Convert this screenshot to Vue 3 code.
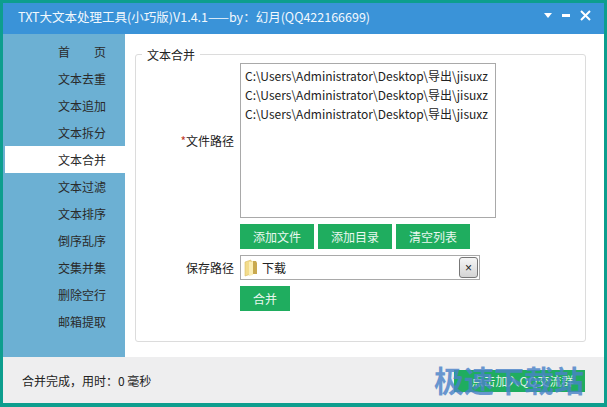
<template>
  <div class="window">
    <header class="titlebar">
      <span class="title">TXT大文本处理工具(小巧版)V1.4.1——by：幻月(QQ422166699)</span>
      <div class="controls">
        <svg width="8" height="5" viewBox="0 0 8 5"><path d="M0 0h8L4 5z" fill="#fff" /></svg>
        <svg width="8" height="3" viewBox="0 0 8 3"><rect width="8" height="3" y="0" fill="#fff" /></svg>
        <svg width="11" height="11" viewBox="0 0 11 11"><path d="M1 1l9 9M10 1l-9 9" stroke="#fff" stroke-width="2" fill="none" /></svg>
      </div>
    </header>

    <div class="body">
      <nav class="sidebar">
        <div
          v-for="item in menu"
          :key="item"
          class="menu-item"
          :class="{ active: item === '文本合并' }"
        >
          <span v-if="item === '首页'" class="spread"><i>首</i><i>页</i></span>
          <span v-else>{{ item }}</span>
        </div>
      </nav>

      <main class="content">
        <fieldset class="group">
          <legend>文本合并</legend>
          <div class="row">
            <label class="field-label"><em>*</em>文件路径</label>
            <div class="listbox">
              <div v-for="n in 3" :key="n" class="path">C:\Users\Administrator\Desktop\导出\jisuxz</div>
            </div>
          </div>
          <div class="row buttons">
            <span class="field-label"></span>
            <button v-for="b in actions" :key="b" class="btn">{{ b }}</button>
          </div>
          <div class="row save">
            <label class="field-label">保存路径</label>
            <div class="picker">
              <svg class="folder" width="14" height="18" viewBox="0 0 14 18">
                <path d="M1 3 L7 1 V15 L1 17 Z" fill="#f3dc8c" stroke="#d8bc63" stroke-width=".6" />
                <path d="M7 2 H12 L13 4 V15 H7 Z" fill="#c9a94f" />
                <path d="M5 3 L9 2 V16 L5 17 Z" fill="#fbeeb6" />
              </svg>
              <span class="picker-text">下载</span>
              <button class="clear">×</button>
            </div>
          </div>
          <div class="row merge">
            <span class="field-label"></span>
            <button class="btn small">合并</button>
          </div>
        </fieldset>
      </main>
    </div>

    <footer class="status">
      <span>合并完成，用时：0 毫秒</span>
      <div class="qq-wrap">
        <button class="btn qq">点击加入QQ交流群</button>
        <span class="watermark">极速下载站</span>
      </div>
    </footer>
  </div>
</template>

<script setup>
const menu = [
  "首页",
  "文本去重",
  "文本追加",
  "文本拆分",
  "文本合并",
  "文本过滤",
  "文本排序",
  "倒序乱序",
  "交集并集",
  "删除空行",
  "邮箱提取",
];
const actions = ["添加文件", "添加目录", "清空列表"];
</script>

<style>
html,
body {
  margin: 0;
  background: #0d9e8e;
}
</style>

<style scoped>
.window {
  box-sizing: border-box;
  width: 607px;
  height: 407px;
  padding: 3px 3px 4px 3px;
  display: flex;
  flex-direction: column;
  font-family: "Noto Sans CJK SC", "Noto Sans", sans-serif;
  font-size: 12px;
  color: #222;
}
.titlebar {
  height: 31px;
  flex: none;
  display: flex;
  align-items: center;
  justify-content: space-between;
  padding: 0 13px 0 15px;
  background: #3a93d8;
  color: #f2f8fd;
}
.title {
  font-size: 12.5px;
  white-space: nowrap;
  margin-top: -4px;
}
.controls {
  display: flex;
  align-items: center;
  gap: 10px;
  margin-top: -6px;
}
.body {
  flex: 1;
  display: flex;
  min-height: 0;
  background: #fff;
}
.sidebar {
  width: 122px;
  flex: none;
  padding-top: 4px;
  background: #6cb0d3;
}
.menu-item {
  height: 27px;
  display: flex;
  align-items: center;
  padding-left: 55px;
  color: #2a2a2a;
  font-size: 12px;
}
.menu-item.active {
  margin-left: 2px;
  padding-left: 53px;
  background: #fff;
}
.spread {
  width: 48px;
  display: flex;
  justify-content: space-between;
}
.spread i {
  font-style: normal;
}
.content {
  flex: 1;
  padding: 12px 18px 15px 10px;
  display: flex;
  min-width: 0;
}
.group {
  flex: 1;
  min-width: 0;
  margin: 0;
  padding: 0 0 0 0;
  border: 1px solid #dcdcdc;
  border-radius: 3px;
  box-sizing: border-box;
}
legend {
  margin-left: 6px;
  padding: 0 5px;
  font-size: 12px;
  line-height: 17px;
}
.row {
  display: flex;
  align-items: center;
}
.field-label {
  width: 98px;
  flex: none;
  text-align: right;
  margin-right: 6px;
}
.field-label em {
  color: #c0392b;
  font-style: normal;
}
.listbox {
  box-sizing: border-box;
  width: 256px;
  height: 155px;
  margin-top: 0;
  padding: 2px 0 0 4px;
  border: 1px solid #a9a9a9;
  overflow: hidden;
}
.path {
  height: 19px;
  line-height: 19px;
  white-space: nowrap;
  overflow: hidden;
  font-size: 12px;
}
.buttons {
  margin-top: 6px;
  gap: 0;
}
.btn {
  width: 74px;
  height: 25px;
  margin-right: 4px;
  padding: 0;
  border: 0;
  background: #1fad5f;
  color: #eaf8f0;
  font: inherit;
}
.btn.small {
  width: 50px;
}
.save {
  margin-top: 6px;
}
.picker {
  box-sizing: border-box;
  width: 240px;
  height: 25px;
  display: flex;
  align-items: center;
  padding: 0 1px 0 3px;
  border: 1px solid #a9a9a9;
}
.picker-text {
  flex: 1;
  margin-left: 4px;
}
.clear {
  box-sizing: border-box;
  width: 19px;
  height: 21px;
  padding: 0;
  border: 1px solid #777;
  border-radius: 3px;
  background: linear-gradient(#f6f6f6, #d4d4d4);
  font: 12px/1 "Liberation Sans", sans-serif;
  color: #222;
}
.merge {
  margin-top: 6px;
}
.status {
  height: 46px;
  flex: none;
  display: flex;
  align-items: center;
  justify-content: space-between;
  padding: 0 19px 0 19px;
  background: #eeeeef;
}
.qq-wrap {
  position: relative;
  margin-top: 1px;
}
.btn.qq {
  display: block;
  width: 131px;
  height: 22px;
  margin: 0;
  padding-left: 6px;
  color: #dff2e8;
}
.watermark {
  position: absolute;
  right: 0;
  top: -9px;
  font-size: 30px;
  line-height: 36px;
  font-weight: 700;
  white-space: nowrap;
  color: rgba(74, 130, 200, 0.82);
  right: 1px;
}
</style>
